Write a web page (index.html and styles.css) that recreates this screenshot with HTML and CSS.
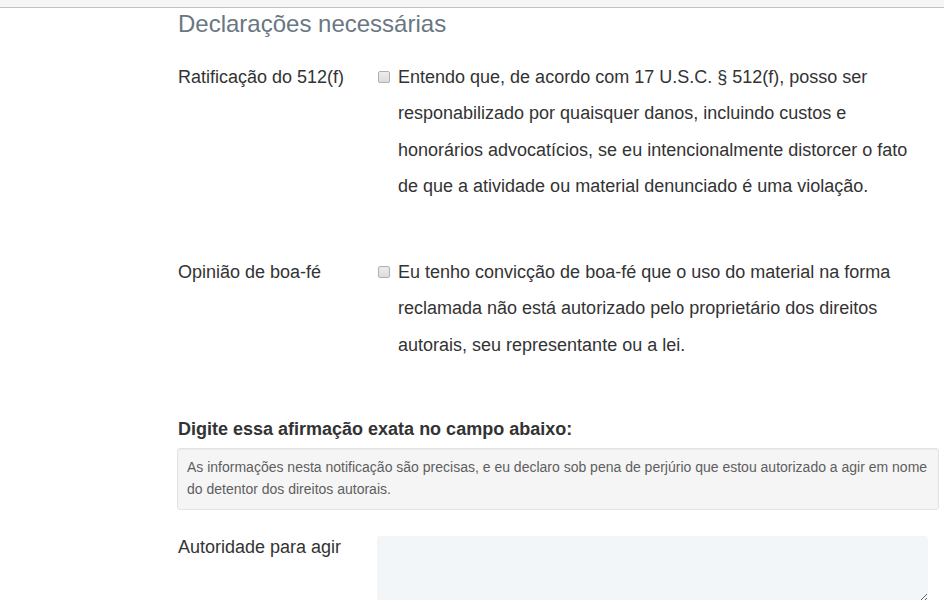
FILE: index.html
```html
<!DOCTYPE html>
<html lang="pt">

<head>
    <meta charset="UTF-8">
    <meta name="viewport" content="width=device-width, initial-scale=1.0">
    <title>Declarações necessárias</title>

    <link rel="stylesheet" href="styles.css">
</head>

<body>
    <div class="topbar"></div>
    <div class="page">
        <h2 class="section-title">Declarações necessárias</h2>

        <div class="row">
            <label class="row-label">Ratificação do 512(f)</label>
            <div class="row-field">
                <input type="checkbox" class="check">
                <p class="check-text">Entendo que, de acordo com 17 U.S.C. § 512(f), posso ser responabilizado por quaisquer danos, incluindo custos e honorários advocatícios, se eu intencionalmente distorcer o fato de que a atividade ou material denunciado é uma violação.</p>
            </div>
        </div>

        <div class="row">
            <label class="row-label">Opinião de boa-fé</label>
            <div class="row-field">
                <input type="checkbox" class="check">
                <p class="check-text">Eu tenho convicção de boa-fé que o uso do material na forma reclamada não está autorizado pelo proprietário dos direitos autorais, seu representante ou a lei.</p>
            </div>
        </div>

        <h4 class="statement-title">Digite essa afirmação exata no campo abaixo:</h4>
        <div class="statement">
            As informações nesta notificação são precisas, e eu declaro sob pena de perjúrio que estou autorizado a agir em nome do detentor dos direitos autorais.
        </div>

        <div class="row authority">
            <label class="row-label">Autoridade para agir</label>
            <textarea class="auth-input"></textarea>
        </div>
    </div>
</body>

</html>
```

FILE: styles.css
```css
* {
    margin: 0;
    padding: 0;
    box-sizing: border-box;
}

body {
    font-family: "Liberation Sans", Arial, sans-serif;
    font-size: 18px;
    color: #333;
    background-color: #fff;
}

.topbar {
    height: 8px;
    background-color: #f6f6f6;
    border-bottom: 1px solid #c2c2c2;
}

.page {
    padding-left: 178px;
    width: 939px;
}

.section-title {
    font-size: 24px;
    font-weight: normal;
    color: #6a7782;
    line-height: 30px;
    margin-top: 1px;
    margin-bottom: 20px;
}

.row {
    display: flex;
    margin-bottom: 50px;
}

.row-label {
    width: 200px;
    flex-shrink: 0;
    line-height: 37px;
}

.row-field {
    display: flex;
    align-items: flex-start;
    width: 530px;
}

.check {
    appearance: none;
    width: 12px;
    height: 12px;
    margin-top: 12px;
    margin-right: 8px;
    flex-shrink: 0;
    border: 1px solid #b0b0b0;
    border-radius: 2px;
    background: linear-gradient(#ececec, #dcdcdc);
}

.check-text {
    line-height: 36.3px;
}

.statement-title {
    font-size: 18px;
    font-weight: bold;
    line-height: 22px;
    margin-top: 55px;
    margin-bottom: 8px;
}

.statement {
    margin-left: -1px;
    font-size: 14px;
    line-height: 22px;
    color: #5e5e5e;
    background-color: #f5f5f5;
    border: 1px solid #e3e3e3;
    border-radius: 3px;
    padding: 7px 9px 9px 9px;
    box-shadow: inset 0 1px 1px rgba(0, 0, 0, 0.04);
}

.authority {
    margin-top: 26px;
    margin-bottom: 0;
}

.auth-input {
    width: 551px;
    height: 66px;
    margin-left: -1px;
    background-color: #f3f6f8;
    border: none;
    border-radius: 3px;
    resize: both;
}

.authority .row-label {
    line-height: 22px;
    padding-top: 0;
}
```
